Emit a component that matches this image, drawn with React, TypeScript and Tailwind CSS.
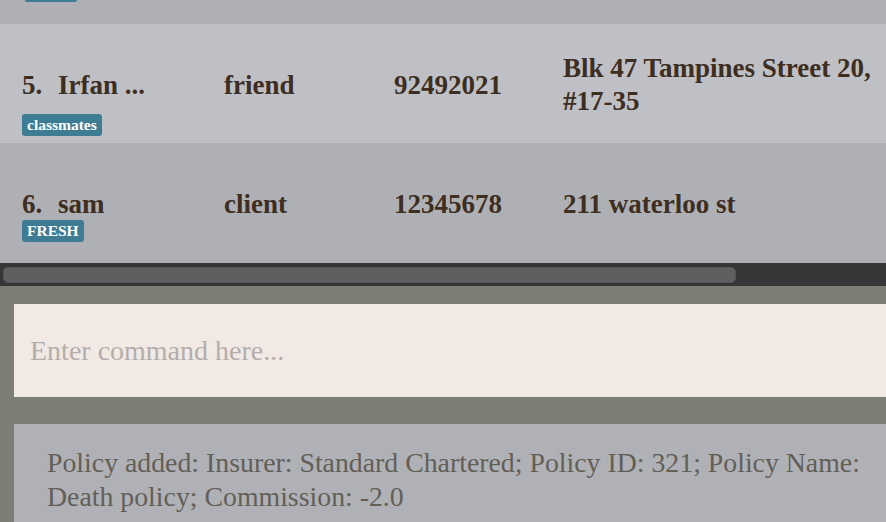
const serif = { fontFamily: '"Liberation Serif", "DejaVu Serif", serif' };

const rows = [
  {
    index: '5.',
    name: 'Irfan ...',
    role: 'friend',
    phone: '92492021',
    address: 'Blk 47 Tampines Street 20, #17-35',
    tag: 'classmates',
    rowClass: 'h-[119px] bg-[#bfc0c5] pt-[28px]',
    lineClass: 'h-[66px]',
    tagClass: 'mt-[-5px]',
  },
  {
    index: '6.',
    name: 'sam',
    role: 'client',
    phone: '12345678',
    address: '211 waterloo st',
    tag: 'FRESH',
    rowClass: 'h-[120px] bg-[#afb0b5] pt-[45px]',
    lineClass: 'h-[33px]',
    tagClass: 'mt-[-2px]',
  },
];

function App() {
  return (
    <div
      className="w-[886px] h-[522px] overflow-hidden flex flex-col bg-[#7d7e76]"
      style={serif}
    >
      {/* list */}
      <div className="h-[24px] bg-[#afb0b5]">
        <div className="ml-[25px] w-[52px] h-[2px] bg-[#3d7c93] rounded-b-[2px]" />
      </div>
      {rows.map((r) => (
        <div key={r.index} className={`flex flex-col ${r.rowClass}`}>
          <div
            className={`flex items-center text-[27px] leading-[33px] font-bold text-[#3d2e21] ${r.lineClass}`}
          >
            <div className="w-[224px] pl-[22px] flex shrink-0">
              <span className="w-[36px]">{r.index}</span>
              <span>{r.name}</span>
            </div>
            <div className="w-[170px] shrink-0">{r.role}</div>
            <div className="w-[169px] shrink-0">{r.phone}</div>
            <div className="w-[318px] shrink-0">{r.address}</div>
          </div>
          <div className={`ml-[22px] ${r.tagClass}`}>
            <span className="inline-block h-[22px] px-[5px] rounded-[3px] bg-[#3d7c93] text-white text-[15.5px] leading-[22px] font-bold">
              {r.tag}
            </span>
          </div>
        </div>
      ))}

      {/* horizontal scrollbar */}
      <div className="h-[23px] bg-[#363636] pt-[4px] pl-[3px]">
        <div className="w-[733px] h-[16px] rounded-[5px] bg-[#5f5f5f] border border-[#555555]" />
      </div>

      {/* command box */}
      <div className="flex-1 flex flex-col pl-[14px] pt-[18px]">
        <div className="h-[93px] bg-[#f2e9e4] flex items-center pl-[16px] text-[28px] text-[#b3aeab]">
          Enter command here...
        </div>
        <div className="mt-[27px] flex-1 bg-[#b0b1b6] pl-[33px] pt-[22px] text-[27.8px] leading-[34px] text-[#625f57] whitespace-nowrap">
          Policy added: Insurer: Standard Chartered; Policy ID: 321; Policy Name:
          <br />
          Death policy; Commission: -2.0
        </div>
      </div>
    </div>
  );
}

export default App;
